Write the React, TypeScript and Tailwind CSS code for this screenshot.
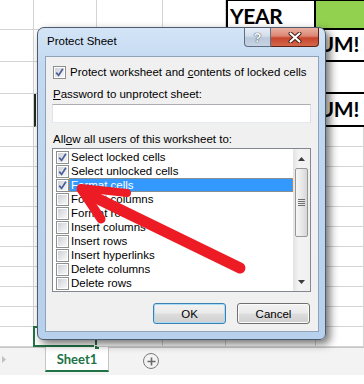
import React from "react";

const colW = ["w-[34px]", "w-[63px]", "w-[66px]", "w-[63px]", "w-[90px]", "w-[48px]"];
const rowH = [
  "h-[30px]", "h-[32px]", "h-[32px]", "h-[33px]",
  "h-[20px]", "h-[20px]", "h-[20px]", "h-[20px]", "h-[20px]", "h-[20px]",
  "h-[20px]", "h-[20px]", "h-[20px]", "h-[20px]", "h-[20px]",
];

function Cell({ r, c }: { r: number; c: number }) {
  const base = "relative shrink-0 h-full " + colW[c] + " ";
  const grid = "border-r border-b border-[#d4d4d4]";
  if (r === 0 && c === 4) {
    return (
      <div className={base + "border-t border-t-black border-l-2 border-l-black border-r-2 border-r-black border-b-2 border-b-black flex items-end pl-[2px]"}>
        <span className="font-['Lato',sans-serif] font-bold text-[21px] leading-[25px] tracking-[-0.3px] text-black">YEAR</span>
      </div>
    );
  }
  if (r === 0 && c === 5) {
    return <div className={base + "bg-[#92d050] border-t border-t-black border-b-2 border-b-black"} />;
  }
  if ((r === 1 || r === 3) && c === 5) {
    return (
      <div className={base + "border-b-2 border-b-black flex items-end justify-end pr-[5px] pb-[4px]"}>
        <span className="font-['Lato',sans-serif] font-bold text-[21px] leading-[25px] tracking-[-0.3px] text-black whitespace-nowrap">UM!</span>
      </div>
    );
  }
  if (r === 2 && c === 5) {
    return <div className={base + "border-b-2 border-b-black"} />;
  }
  if (r === 3 && c === 1) {
    return <div className={base + grid + " border-l-2 border-l-[#1e2a22]"} />;
  }
  if (r === 14 && c === 1) {
    return (
      <div className={base + grid}>
        <div className="absolute -left-[1px] -top-[1px] -right-[1px] -bottom-[1px] border-2 border-[#217346]" />
        <div className="absolute -right-[4px] -bottom-[4px] w-[6px] h-[5px] bg-[#217346] border border-white" />
      </div>
    );
  }
  return <div className={base + grid} />;
}

function Sheet() {
  return (
    <div className="flex flex-col">
      {rowH.map((h, r) => (
        <div key={r} className={"flex " + h}>
          {colW.map((_, c) => (
            <Cell key={c} r={r} c={c} />
          ))}
        </div>
      ))}
    </div>
  );
}

function TabBar() {
  return (
    <div className="h-[28px] bg-[#f3f3f3] border-t border-[#c6c6c6] flex items-start">
      <div className="w-[45px] pl-[2px] pt-[8px]">
        <svg width="4" height="7" viewBox="0 0 4 7">
          <path d="M0 0 L4 3.5 L0 7 Z" fill="#c0c0c0" />
        </svg>
      </div>
      <div className="w-[64px] h-[25px] -mt-[1px] bg-white border-x border-[#c6c6c6] border-b-2 border-b-[#217346] flex items-center justify-center">
        <span className="font-['Lato',sans-serif] font-bold text-[13px] leading-[16px] text-[#217346]">Sheet1</span>
      </div>
      <div className="ml-[34px] mt-[5px] w-[16px] h-[16px] rounded-full border-[1.5px] border-[#7a7a7a] flex items-center justify-center">
        <svg width="9" height="9" viewBox="0 0 9 9">
          <path d="M4.5 0.5 V8.5 M0.5 4.5 H8.5" stroke="#6a6a6a" strokeWidth="1.6" />
        </svg>
      </div>
    </div>
  );
}

function Check({ checked }: { checked: boolean }) {
  return (
    <span className="w-[13px] h-[13px] shrink-0 border border-[#8e8f8f] bg-white p-[1px] flex">
      <span className="flex-1 bg-[linear-gradient(135deg,#cdd0d6_0%,#e6e7ea_55%,#f7f7f7_100%)] flex items-center justify-center">
        {checked && (
          <svg width="9" height="9" viewBox="0 0 9 9">
            <path d="M1.2 4.6 L3.6 7.4 L7.9 0.8" stroke="#4b5f99" strokeWidth="1.7" fill="none" />
          </svg>
        )}
      </span>
    </span>
  );
}

const items: [string, boolean][] = [
  ["Select locked cells", true],
  ["Select unlocked cells", true],
  ["Format cells", true],
  ["Format columns", false],
  ["Format rows", false],
  ["Insert columns", false],
  ["Insert rows", false],
  ["Insert hyperlinks", false],
  ["Delete columns", false],
  ["Delete rows", false],
];

function Scrollbar() {
  return (
    <div className="w-[17px] shrink-0 flex flex-col bg-[linear-gradient(90deg,#e3e3e3_0%,#f3f3f3_35%,#f0f0f0_100%)]">
      <div className="h-[17px] flex items-center justify-center pt-[2px]">
        <svg width="7" height="4" viewBox="0 0 7 4">
          <path d="M0 4 L3.5 0 L7 4 Z" fill="#3c3c3c" />
        </svg>
      </div>
      <div className="flex-1 pt-[2px] px-[2px]">
        <div className="h-[69px] rounded-[2px] border border-[#979797] bg-[linear-gradient(90deg,#f6f6f6_0%,#e9e9e9_50%,#d6d6d6_100%)] flex flex-col items-center justify-center gap-[1px]">
          <span className="w-[7px] h-[1px] bg-[#6e6e6e]" />
          <span className="w-[7px] h-[1px] bg-[#6e6e6e]" />
          <span className="w-[7px] h-[1px] bg-[#6e6e6e]" />
          <span className="w-[7px] h-[1px] bg-[#6e6e6e]" />
        </div>
      </div>
      <div className="h-[17px] flex items-center justify-center pb-[2px]">
        <svg width="7" height="4" viewBox="0 0 7 4">
          <path d="M0 0 L3.5 4 L7 0 Z" fill="#3c3c3c" />
        </svg>
      </div>
    </div>
  );
}

function Btn({ label, def }: { label: string; def?: boolean }) {
  return (
    <div
      className={
        "w-[73px] h-[21px] rounded-[3px] border flex items-center justify-center text-black bg-[linear-gradient(180deg,#f2f2f2_0%,#ebebeb_48%,#dddddd_52%,#cfcfcf_100%)] " +
        (def
          ? "border-[#3c7fb1] shadow-[inset_0_0_0_1px_#a9dcf7]"
          : "border-[#707070] shadow-[inset_0_0_0_1px_#fbfbfb]")
      }
    >
      {label}
    </div>
  );
}

function Dialog() {
  return (
    <div className="absolute left-[37px] top-[27px] w-[289px] h-[313px] rounded-t-[7px] rounded-b-[6px] border border-[#4d5b6c] bg-[linear-gradient(180deg,#d3e4f6_0%,#c3d9f1_12%,#bcd4ee_60%,#b7d0eb_100%)] shadow-[4px_4px_9px_rgba(0,0,0,0.55)] flex flex-col pl-[7px] pr-[6px] pb-[7px] font-['Liberation_Sans',Arial,sans-serif] text-[11.5px]">
      <div className="h-[28px] pt-[5px] pl-[2px] leading-[16px] text-black">Protect Sheet</div>
      <div className="absolute top-0 right-[6px] flex">
        <div className="w-[27px] h-[19px] rounded-bl-[4px] border border-t-0 border-[#5f6e82] bg-[linear-gradient(180deg,#e6eef7_0%,#d3deeb_45%,#b9c8db_55%,#c7d4e4_100%)] flex items-center justify-center">
          <span className="text-[13px] leading-[13px] font-bold text-white [text-shadow:0_0_1px_#2d3b4e,0_0_1px_#2d3b4e]">?</span>
        </div>
        <div className="w-[48px] h-[19px] rounded-br-[4px] border border-t-0 border-l-0 border-[#5d2216] bg-[linear-gradient(180deg,#eab0a2_0%,#dc8672_45%,#c7452c_55%,#d4674b_100%)] flex items-center justify-center">
          <svg width="14" height="11" viewBox="0 0 14 11">
            <path d="M2.5 1.5 L11.5 9.5 M11.5 1.5 L2.5 9.5" stroke="#3b1a12" strokeWidth="4" strokeLinecap="round" />
            <path d="M2.5 1.5 L11.5 9.5 M11.5 1.5 L2.5 9.5" stroke="#ffffff" strokeWidth="2.2" strokeLinecap="round" />
          </svg>
        </div>
      </div>
      <div className="flex-1 border border-[#8fa3bb] bg-[#f0f0f0] flex flex-col pl-[6px] pr-[7px] pt-[7px] pb-[7px] leading-[16px] text-black">
        <div className="flex items-center h-[16px] ml-[1px] gap-[4px] whitespace-nowrap">
          <Check checked />
          <span>
            Protect worksheet and <u>c</u>ontents of locked cells
          </span>
        </div>
        <div className="mt-[6px] ml-[1px] h-[16px] whitespace-nowrap">
          <u>P</u>assword to unprotect sheet:
        </div>
        <div className="mt-[2px] h-[19px] border border-[#abadb3] border-l-[#e2e3ea] border-r-[#dbdfe6] border-b-[#e3e9ef] bg-white" />
        <div className="mt-[8px] ml-[1px] h-[16px] whitespace-nowrap">
          All<u>o</u>w all users of this worksheet to:
        </div>
        <div className="mt-[1px] h-[144px] border border-[#828790] bg-white flex">
          <div className="flex-1 pt-[1px] flex flex-col">
            {items.map(([t, ch], i) => (
              <div key={i} className="flex h-[14px] items-center">
                <span className="ml-[3px]">
                  <Check checked={ch} />
                </span>
                <div
                  className={
                    "flex-1 h-[14px] flex items-center pl-[1px] whitespace-nowrap " +
                    (i === 2 ? "bg-[#3399ff] text-white border border-dotted border-[#d8822a]" : "border border-transparent")
                  }
                >
                  {t}
                </div>
              </div>
            ))}
          </div>
          <Scrollbar />
        </div>
        <div className="mt-[11px] flex justify-end gap-[11px] mr-[1px]">
          <Btn label="OK" def />
          <Btn label="Cancel" />
        </div>
      </div>
    </div>
  );
}

function Arrow() {
  return (
    <svg className="absolute left-0 top-0 pointer-events-none" width="364" height="384" viewBox="0 0 364 384">
      <g stroke="#ed1c24" strokeLinecap="round" fill="none">
        <line x1="86" y1="193" x2="240" y2="268" strokeWidth="11" />
        <line x1="81" y1="188" x2="127" y2="193" strokeWidth="8" />
        <line x1="81" y1="189" x2="101" y2="219" strokeWidth="9" />
      </g>
    </svg>
  );
}

export default function App() {
  return (
    <div className="relative w-[364px] h-[384px] overflow-hidden bg-white font-['Lato',sans-serif]">
      <Sheet />
      <TabBar />
      <Dialog />
      <Arrow />
    </div>
  );
}
